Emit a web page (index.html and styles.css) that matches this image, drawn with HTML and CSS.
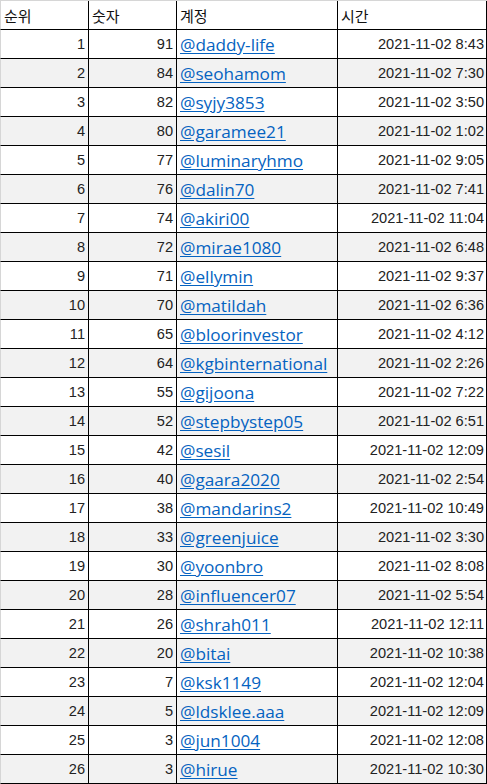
FILE: index.html
```html
<!DOCTYPE html>
<html lang="ko">
<head>
    <meta charset="UTF-8">
    <meta name="viewport" content="width=device-width, initial-scale=1.0">
    <title>순위</title>
    <link rel="stylesheet" href="styles.css">
</head>
<body>
    <table class="rank">
        <colgroup>
            <col class="c-rank">
            <col class="c-num">
            <col class="c-acct">
            <col class="c-time">
        </colgroup>
        <thead>
            <tr>
                <th>순위</th>
                <th>숫자</th>
                <th>계정</th>
                <th>시간</th>
            </tr>
        </thead>
        <tbody>
            <tr><td class="n">1</td><td class="n">91</td><td><a href="#">@daddy-life</a></td><td class="t">2021-11-02 8:43</td></tr>
            <tr><td class="n">2</td><td class="n">84</td><td><a href="#">@seohamom</a></td><td class="t">2021-11-02 7:30</td></tr>
            <tr><td class="n">3</td><td class="n">82</td><td><a href="#">@syjy3853</a></td><td class="t">2021-11-02 3:50</td></tr>
            <tr><td class="n">4</td><td class="n">80</td><td><a href="#">@garamee21</a></td><td class="t">2021-11-02 1:02</td></tr>
            <tr><td class="n">5</td><td class="n">77</td><td><a href="#">@luminaryhmo</a></td><td class="t">2021-11-02 9:05</td></tr>
            <tr><td class="n">6</td><td class="n">76</td><td><a href="#">@dalin70</a></td><td class="t">2021-11-02 7:41</td></tr>
            <tr><td class="n">7</td><td class="n">74</td><td><a href="#">@akiri00</a></td><td class="t">2021-11-02 11:04</td></tr>
            <tr><td class="n">8</td><td class="n">72</td><td><a href="#">@mirae1080</a></td><td class="t">2021-11-02 6:48</td></tr>
            <tr><td class="n">9</td><td class="n">71</td><td><a href="#">@ellymin</a></td><td class="t">2021-11-02 9:37</td></tr>
            <tr><td class="n">10</td><td class="n">70</td><td><a href="#">@matildah</a></td><td class="t">2021-11-02 6:36</td></tr>
            <tr><td class="n">11</td><td class="n">65</td><td><a href="#">@bloorinvestor</a></td><td class="t">2021-11-02 4:12</td></tr>
            <tr><td class="n">12</td><td class="n">64</td><td><a href="#">@kgbinternational</a></td><td class="t">2021-11-02 2:26</td></tr>
            <tr><td class="n">13</td><td class="n">55</td><td><a href="#">@gijoona</a></td><td class="t">2021-11-02 7:22</td></tr>
            <tr><td class="n">14</td><td class="n">52</td><td><a href="#">@stepbystep05</a></td><td class="t">2021-11-02 6:51</td></tr>
            <tr><td class="n">15</td><td class="n">42</td><td><a href="#">@sesil</a></td><td class="t">2021-11-02 12:09</td></tr>
            <tr><td class="n">16</td><td class="n">40</td><td><a href="#">@gaara2020</a></td><td class="t">2021-11-02 2:54</td></tr>
            <tr><td class="n">17</td><td class="n">38</td><td><a href="#">@mandarins2</a></td><td class="t">2021-11-02 10:49</td></tr>
            <tr><td class="n">18</td><td class="n">33</td><td><a href="#">@greenjuice</a></td><td class="t">2021-11-02 3:30</td></tr>
            <tr><td class="n">19</td><td class="n">30</td><td><a href="#">@yoonbro</a></td><td class="t">2021-11-02 8:08</td></tr>
            <tr><td class="n">20</td><td class="n">28</td><td><a href="#">@influencer07</a></td><td class="t">2021-11-02 5:54</td></tr>
            <tr><td class="n">21</td><td class="n">26</td><td><a href="#">@shrah011</a></td><td class="t">2021-11-02 12:11</td></tr>
            <tr><td class="n">22</td><td class="n">20</td><td><a href="#">@bitai</a></td><td class="t">2021-11-02 10:38</td></tr>
            <tr><td class="n">23</td><td class="n">7</td><td><a href="#">@ksk1149</a></td><td class="t">2021-11-02 12:04</td></tr>
            <tr><td class="n">24</td><td class="n">5</td><td><a href="#">@ldsklee.aaa</a></td><td class="t">2021-11-02 12:09</td></tr>
            <tr><td class="n">25</td><td class="n">3</td><td><a href="#">@jun1004</a></td><td class="t">2021-11-02 12:08</td></tr>
            <tr><td class="n">26</td><td class="n">3</td><td><a href="#">@hirue</a></td><td class="t">2021-11-02 10:30</td></tr>
        </tbody>
    </table>
</body>
</html>
```

FILE: styles.css
```css
body { margin: 0; background: #fff; font-family: "Liberation Sans", Arial, "Noto Sans CJK KR", sans-serif; color: #222; }
.rank { border-collapse: separate; border-spacing: 0; table-layout: fixed; width: 487px; border-top: 1px solid #d6d6d6; }
.c-rank { width: 89px; }
.c-num { width: 88px; }
.c-acct { width: 161px; }
.c-time { width: 149px; }
th, td { box-sizing: border-box; height: 29px; padding: 0 3px; border-right: 1px solid #000; border-bottom: 1px solid #000; white-space: nowrap; overflow: hidden; vertical-align: middle; }
th:first-child, td:first-child { border-left: 1px solid #d6d6d6; }
th { font-family: "Noto Sans CJK KR", sans-serif; font-weight: normal; font-size: 15px; text-align: left; color: #111; }
td { font-size: 14.6px; }
tbody tr:nth-child(even) td { background: #f2f2f2; }
.n { text-align: right; }
.t { text-align: right; padding-right: 2px; }
td a { font-family: "Open Sans", sans-serif; font-size: 17.2px; color: #0563c1; text-decoration: underline; text-underline-offset: 2px; }
```
